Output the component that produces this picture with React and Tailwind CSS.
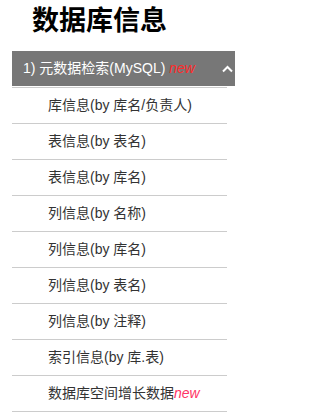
import React from "react";

const items = [
  "库信息(by 库名/负责人)",
  "表信息(by 表名)",
  "表信息(by 库名)",
  "列信息(by 名称)",
  "列信息(by 库名)",
  "列信息(by 表名)",
  "列信息(by 注释)",
  "索引信息(by 库.表)",
];

export default function App() {
  return (
    <div
      className="w-[235px] h-[416px] bg-white overflow-hidden"
      style={{ fontFamily: '"Liberation Sans", "Noto Sans CJK SC", sans-serif' }}
    >
      <h1 className="pl-[32px] pt-[1px] text-[27px] leading-[40px] font-bold text-black">
        数据库信息
      </h1>

      <div className="mt-[10px] ml-3 h-[35px] bg-[#777777] flex items-center justify-between pl-[11px] pr-[2px] text-white text-[14px]">
        <span>
          1) 元数据检索(MySQL){" "}
          <i className="text-[#ff2a2a] text-[14px]">new</i>
        </span>
        <svg width="11" height="8" viewBox="0 0 11 8" fill="none">
          <path d="M1 6.5 L5.5 2 L10 6.5" stroke="white" strokeWidth="2" />
        </svg>
      </div>

      <ul className="ml-3 mr-2 mt-[1px] border-t border-[#cccccc] text-[14px] text-[#333333]">
        {items.map((t) => (
          <li key={t} className="h-[36px] pl-9 flex items-center border-b border-[#cccccc]">
            {t}
          </li>
        ))}
        <li className="h-[36px] pl-9 flex items-center border-b border-[#cccccc]">
          数据库空间增长数据<i className="text-[#ff3366] text-[14px]">new</i>
        </li>
      </ul>
    </div>
  );
}
